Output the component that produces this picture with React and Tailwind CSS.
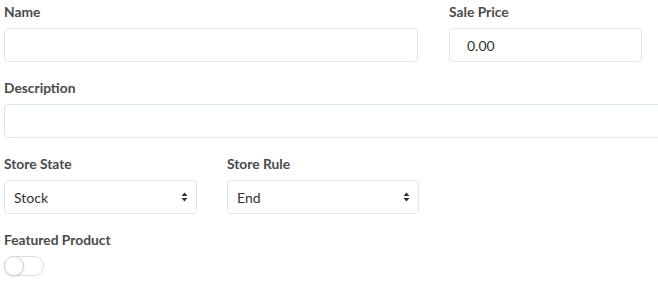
import { useState } from 'react';

function Label({ children }) {
  return (
    <label className="block h-5 leading-5 mb-[6px] text-[13.8px] font-bold text-[#4a4a4a]">
      {children}
    </label>
  );
}

function SelectBox({ value }) {
  return (
    <div className="relative h-[34px] rounded-[4px] border border-[#dde7e9] bg-white flex items-center pl-[9px] text-[14px] text-[#333]">
      {value}
      <svg className="absolute right-[8px] top-1/2 -translate-y-1/2" width="7" height="10" viewBox="0 0 7 10">
        <path d="M3.5 0.5 L6.5 4 L0.5 4 Z" fill="#333" />
        <path d="M3.5 9.5 L6.5 6 L0.5 6 Z" fill="#333" />
      </svg>
    </div>
  );
}

export default function App() {
  const [featured, setFeatured] = useState(false);

  return (
    <div className="w-[658px] h-[283px] overflow-hidden bg-white pl-[4px] pt-[2px]" style={{ fontFamily: 'Lato, "Open Sans", sans-serif' }}>
      <div className="flex gap-[31px] mb-4">
        <div className="w-[414px]">
          <Label>Name</Label>
          <input className="w-full h-[34px] rounded-[4px] border border-[#dde7e9] px-[9px] text-[14px] text-[#333] outline-none" />
        </div>
        <div className="w-[193px]">
          <Label>Sale Price</Label>
          <input
            defaultValue="0.00"
            className="w-full h-[34px] rounded-[4px] border border-[#dde7e9] pl-[17px] text-[14px] text-[#333] outline-none"
          />
        </div>
      </div>

      <div className="mb-4">
        <Label>Description</Label>
        <input className="w-[660px] h-[34px] rounded-[4px] border border-[#dde7e9] px-[9px] text-[14px] text-[#333] outline-none" />
      </div>

      <div className="flex gap-[30px] mb-4">
        <div className="w-[193px]">
          <Label>Store State</Label>
          <SelectBox value="Stock" />
        </div>
        <div className="w-[192px]">
          <Label>Store Rule</Label>
          <SelectBox value="End" />
        </div>
      </div>

      <div>
        <Label>Featured Product</Label>
        <button
          onClick={() => setFeatured(!featured)}
          className={`relative w-[40px] h-[20px] rounded-full border border-[#dcdcdc] ${featured ? 'bg-[#26b99a]' : 'bg-white'}`}
        >
          <span
            className={`absolute top-[-1px] w-[20px] h-[20px] rounded-full bg-white border border-[#d5d5d5] shadow-[0_1px_2px_rgba(0,0,0,0.15)] ${featured ? 'left-[19px]' : 'left-[-1px]'}`}
          />
        </button>
      </div>
    </div>
  );
}
